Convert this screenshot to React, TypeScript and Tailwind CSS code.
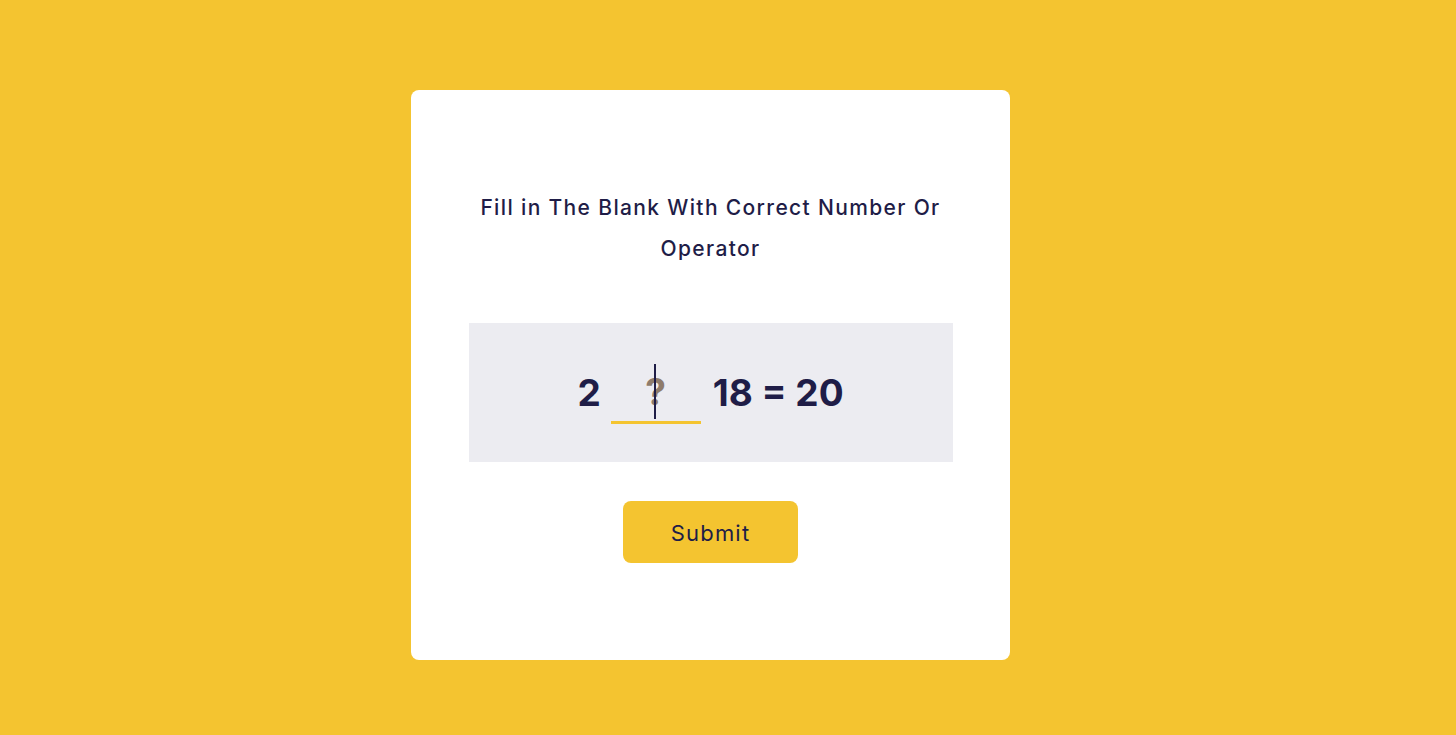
import React from "react";

export default function App() {
  return (
    <div
      className="w-full h-[735px] bg-[#f4c430] flex items-start pt-[90px] pl-[411px]"
      style={{ fontFamily: "Inter, 'Noto Sans', sans-serif" }}
    >
      <div className="w-[599px] h-[570px] bg-white rounded-[8px] flex flex-col items-center pt-[97px]">
        <h1 className="w-[500px] text-center text-[21px] leading-[41px] font-medium text-[#1f1d47] tracking-[1.35px]">
          Fill in The Blank With Correct Number Or Operator
        </h1>
        <div className="mt-[54px] w-[484px] h-[139px] bg-[#ececf1] flex items-center justify-center">
          <div className="flex items-end text-[37px] font-bold text-[#1f1d47] leading-none mt-[4px]">
            <span className="pb-[13px]">2</span>
            <div className="relative ml-[10px] mr-[12px] w-[90px] h-[58px] border-b-[3px] border-[#f4c430] flex items-end justify-center pb-[11px]">
              <span className="text-[#85705d] opacity-90">?</span>
              <span className="absolute left-[43px] top-[-2px] w-[2px] h-[55px] bg-[#1f1d47]" />
            </div>
            <span className="pb-[13px]">18 = 20</span>
          </div>
        </div>
        <button className="mt-[39px] w-[175px] h-[62px] bg-[#f4c430] rounded-[8px] text-[22px] text-[#1f1d47] font-normal tracking-[1.2px] pt-[3px]">
          Submit
        </button>
      </div>
    </div>
  );
}
